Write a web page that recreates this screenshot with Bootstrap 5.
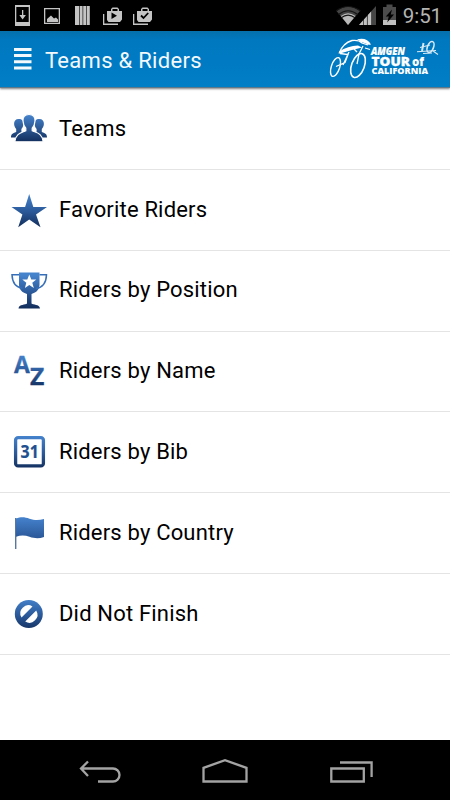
<!DOCTYPE html>
<html lang="en">
<head>
<meta charset="utf-8">
<meta name="viewport" content="width=device-width, initial-scale=1">
<title>Teams &amp; Riders</title>
<link href="https://cdn.jsdelivr.net/npm/bootstrap@5.3.0/dist/css/bootstrap.min.css" rel="stylesheet">
<style>
  body { font-family: Roboto, "Noto Sans", sans-serif; height: 800px; overflow: hidden; }
  svg { display: block; flex: none; }
  .status-strip { height: 31px; }
  .clock { font-size: 20.5px; line-height: 33px; color: #b4b4b4; letter-spacing: -.1px; padding-right: 8px; }
  .app-header { height: 57px; background: linear-gradient(#0570ac, #0078c0 9px, #007ec6); border-bottom: 1px solid #60798a; box-shadow: 0 1px 2px rgba(0,0,0,.5); padding-left: 14px; position: relative; }
  .app-title { font-size: 22px; line-height: 28px; color: #f4f9fc; margin-left: 13px; letter-spacing: .29px; padding-top: 4px; }
  .menu-list { padding-top: 1px; }
  .menu-row { height: 80.85px; padding-left: 5px; border-bottom: 1px solid #e4e4e4; color: #000; font-size: 22px; letter-spacing: .18px; }
  .menu-row span { margin-left: 6px; padding-bottom: 1.4px; }
  .nav-strip { height: 60px; }
</style>
</head>
<body class="d-flex flex-column bg-white">
<svg width="0" height="0" class="position-absolute" aria-hidden="true">
  <defs>
    <linearGradient id="blue" gradientUnits="userSpaceOnUse" x1="0" y1="8" x2="0" y2="41">
      <stop offset="0" stop-color="#4583cd"/><stop offset=".5" stop-color="#2c5b9c"/><stop offset="1" stop-color="#122e5c"/>
    </linearGradient>
    <linearGradient id="flagBlue" gradientUnits="userSpaceOnUse" x1="0" y1="8" x2="0" y2="30">
      <stop offset="0" stop-color="#4583cd"/><stop offset="1" stop-color="#2a5696"/>
    </linearGradient>
    <linearGradient id="peopleBlue" gradientUnits="userSpaceOnUse" x1="0" y1="10" x2="0" y2="37">
      <stop offset="0" stop-color="#4583cd"/><stop offset="1" stop-color="#122e5c"/>
    </linearGradient>
  </defs>
</svg>

<div class="status-strip bg-black d-flex justify-content-between">
  <svg width="160" height="31" fill="#c4c4c4">
    <path fill-rule="evenodd" d="M15 5h15v21H15zM16.300 7v15h12.400V7z"/>
    <path d="M22 10h1.300v7h-1.300zM19.300 15h6.600l-3.300 4.500z"/>
    <path fill-rule="evenodd" d="M44 8h16v16H44zM45.300 9.300v13.400h13.400V9.300z"/>
    <path d="M47 22v-3l4-3.500 3 3 2-1 2 2V22z"/>
    <path d="M75 6h4v19h-4zM79.600 6h3v19h-3zM83.200 6h3v19h-3zM86.800 6h3v19h-3z"/>
    <g id="bag">
      <path d="M103 14h1.300v9.500H118V25h-15z"/>
      <path fill-rule="evenodd" d="M107 11h4V9l1.500-1.500h5L119 9v2h3v8.500l-2 2.500h-11.500l-1.500-2zM112.500 11h5V9h-5z"/>
    </g>
    <path fill="#000" d="M111.500 12.500v6.500l5.500-3.300z"/>
    <use href="#bag" x="30"/>
    <path d="M141 15.500l2.500 2.500 4.700-5" fill="none" stroke="#000" stroke-width="1.800"/>
  </svg>
  <div class="d-flex">
    <svg width="68" height="31">
      <path d="M1.500 11Q13 2.500 25 11L13 25z" fill="#444"/>
      <path d="M5.800 16Q13 10.500 20.500 16L13 25z" fill="#b9b9b9"/>
      <path d="M1 11Q13 2 25.500 11M3.500 14.500Q13 7 22.800 14.500M6.200 17.800Q13 12.500 20 17.800" fill="none" stroke="#151515" stroke-width="1.100"/>
      <path d="M24 25L41 6v19z" fill="#454545"/>
      <path d="M24 25l4-4.500V25zM28.900 19.500l3-3.300V25h-3zM32.900 15l3.200-3.500V25h-3.200z" fill="#c2c2c2"/>
      <path d="M48 7h3.500V4.500h6V7H61v18H48z" fill="#4b4b4b"/>
      <path d="M48 20h13v5H48z" fill="#c0c0c0"/>
      <path d="M57 9.500l-6.200 7h3l-1.600 6 6.800-8h-3.300z" fill="#000"/>
    </svg>
    <div class="clock">9:51</div>
  </div>
</div>

<header class="app-header d-flex align-items-center">
  <svg width="18" height="24" fill="#f4f9fc" aria-label="Menu"><path d="M0 1h17.500v3H0zM0 7h17.500v3H0zM0 13.200h17.500v3H0zM0 19.400h17.500v3H0z"/></svg>
  <div class="app-title">Teams &amp; Riders</div>
  <svg class="ms-auto" width="125" height="56" fill="none" stroke="#fff" aria-label="Amgen Tour of California">
    <ellipse cx="10.500" cy="36" rx="4.200" ry="9.800" transform="rotate(18 10.500 36)" stroke-width="1.400"/>
    <ellipse cx="33" cy="34.500" rx="6.400" ry="12.500" transform="rotate(20 33 34.500)" stroke-width="1.600"/>
    <path d="M14 22.500Q18 12 27 9.500q7-.8 10 2.500l6 2" stroke-width="1.300"/>
    <path d="M32 8.300Q42 6 46 13.500q-3 1-5-1-5-1-9-4.200z" fill="#fff" stroke="none"/>
    <path d="M14 20.500q9-5.500 19-6l4 2-10 2.500-12 3.500z" fill="#fff" stroke="none"/>
    <path d="M15 22.500l8 1-3 8-9 4M24 21l-6 13M38 15l-4 8-2 10M40 17l5 1.500M29 18l3 3" stroke-width="1.300"/>
    <g fill="#fff" stroke="none" font-family="'Open Sans', sans-serif" font-weight="800">
      <text x="46" y="24" font-size="10.500" stroke="#fff" stroke-width=".2" font-style="italic" textLength="34" lengthAdjust="spacingAndGlyphs">AMGEN</text>
      <text x="46.500" y="34.500" font-size="13" stroke="#fff" stroke-width=".3" textLength="38.500" lengthAdjust="spacingAndGlyphs">TOUR</text>
      <text x="87" y="34.500" font-size="12" textLength="12" lengthAdjust="spacingAndGlyphs">of</text>
      <text x="46.500" y="43" font-size="9.200" textLength="56.500" lengthAdjust="spacingAndGlyphs">CALIFORNIA</text>
    </g>
    <g opacity=".85">
      <path d="M98.500 12l-1.500 8" stroke-width="2"/>
      <ellipse cx="105.500" cy="16" rx="3" ry="5.800" transform="rotate(22 105.500 16)" stroke-width="1.600"/>
      <path d="M95 16.500l10-2.500M92 20.700l19-1.200M98 22.500l9-.5M108 20l5 3.500" stroke-width="1.100"/>
    </g>
  </svg>
</header>

<main class="menu-list flex-grow-1">
  <div class="menu-row d-flex align-items-center">
    <svg width="48" height="48" fill="url(#peopleBlue)">
      <path id="side" d="M13.700 14c3.400 0 4.900 2 4.700 5-.1 2.300-1 4-2 5v2.500l4 6H6c0-3.500 1.500-4 5.200-5.500v-3c-1.100-1.300-2-2.700-2.100-5-.1-3 1.400-5 4.600-5z"/>
      <use href="#side" transform="matrix(-1 0 0 1 48 0)"/>
      <path stroke="#fff" stroke-width="1.200" d="M24 9.500c4.500 0 6.300 2.700 6 6.600-.2 3.500-1.500 5.600-2.800 7v2.700c4.200 2 10 2.200 11 11H9.800c1-8.700 6.800-9 11-11v-2.700c-1.300-1.400-2.600-3.500-2.800-7-.3-3.900 1.500-6.600 6-6.600z"/>
    </svg>
    <span>Teams</span>
  </div>
  <div class="menu-row d-flex align-items-center">
    <svg width="48" height="48" fill="url(#blue)"><path d="M24.200 8l4.100 13H42L31 28.600l4.500 12.700L24.200 33.500l-11 7.800 4.200-12.700L6.500 21h13.600z"/></svg>
    <span>Favorite Riders</span>
  </div>
  <div class="menu-row d-flex align-items-center">
    <svg width="48" height="48" fill="url(#blue)">
      <path d="M14 5.500h20.500v12c0 5-3 8-8 9.500v9.500c1.500 1.500 8 .5 8.500 5H13.500c.5-4.500 7-3.500 8.500-5V27c-5-1.500-8-4.500-8-9.500z"/>
      <path d="M14 7.700H7c.3 8 3.500 12.500 10.500 13.500M34.500 7.700h7C41.200 16 38 20.500 31 21.500" fill="none" stroke="#366fb8" stroke-width="1.500"/>
      <path fill="#fff" d="M24.300 7.500l2 5h5l-4 3.300 1.500 5.200-4.500-3-4.400 3 1.400-5.200-4-3.300h5z"/>
    </svg>
    <span>Riders by Position</span>
  </div>
  <div class="menu-row d-flex align-items-center">
    <svg width="48" height="48" fill="url(#blue)" stroke="url(#blue)" stroke-width=".3" font-family="'Open Sans', sans-serif" font-weight="700">
      <text x="9" y="26" font-size="22.500" textLength="16" lengthAdjust="spacingAndGlyphs">A</text>
      <text x="25" y="37.500" font-size="22.500" textLength="14.500" lengthAdjust="spacingAndGlyphs">Z</text>
    </svg>
    <span>Riders by Name</span>
  </div>
  <div class="menu-row d-flex align-items-center">
    <svg width="48" height="48">
      <rect x="10.600" y="9.600" width="27.800" height="28.300" rx="2.500" fill="#fff" stroke="url(#blue)" stroke-width="3.300"/>
      <text x="15.500" y="30" font-family="'Open Sans', sans-serif" font-weight="700" font-size="17" fill="#20508f" stroke="#20508f" stroke-width=".2" textLength="18.500" lengthAdjust="spacingAndGlyphs">31</text>
    </svg>
    <span>Riders by Bib</span>
  </div>
  <div class="menu-row d-flex align-items-center">
    <svg width="48" height="48">
      <path d="M10.700 9v31" stroke="#58779f" stroke-width="1.400"/>
      <path d="M11 9.500c5-2 9-1.500 13.500.2 5 1.800 9.500 1.600 14.500.3v18c-5 1.700-9.500 1.500-14.500-.3C20 26.200 16 26 11 27.700z" fill="url(#flagBlue)"/>
    </svg>
    <span>Riders by Country</span>
  </div>
  <div class="menu-row d-flex align-items-center">
    <svg width="48" height="48">
      <circle cx="23.800" cy="24" r="14" fill="url(#blue)"/>
      <path fill="#fff" d="M16.500 27.500a8 8 0 0 1 11-11zM31.200 20.500a8 8 0 0 1-11 11z"/>
    </svg>
    <span>Did Not Finish</span>
  </div>
</main>

<footer class="nav-strip bg-black">
  <svg width="450" height="60" fill="none" stroke="#a3a3a3" stroke-width="2.300">
    <path d="M81 28.500h32a6.500 6.500 0 0 1 0 13H98M88 21.500l-7 7 7 7.500"/>
    <path d="M203.500 41.500V27.800l21.500-7.600 21.500 7.600v13.700z"/>
    <path d="M331.300 28.500h32.500v13h-32.500zM340 22.500h31.600V37"/>
  </svg>
</footer>
<script src="https://cdn.jsdelivr.net/npm/bootstrap@5.3.0/dist/js/bootstrap.bundle.min.js"></script>
</body>
</html>
